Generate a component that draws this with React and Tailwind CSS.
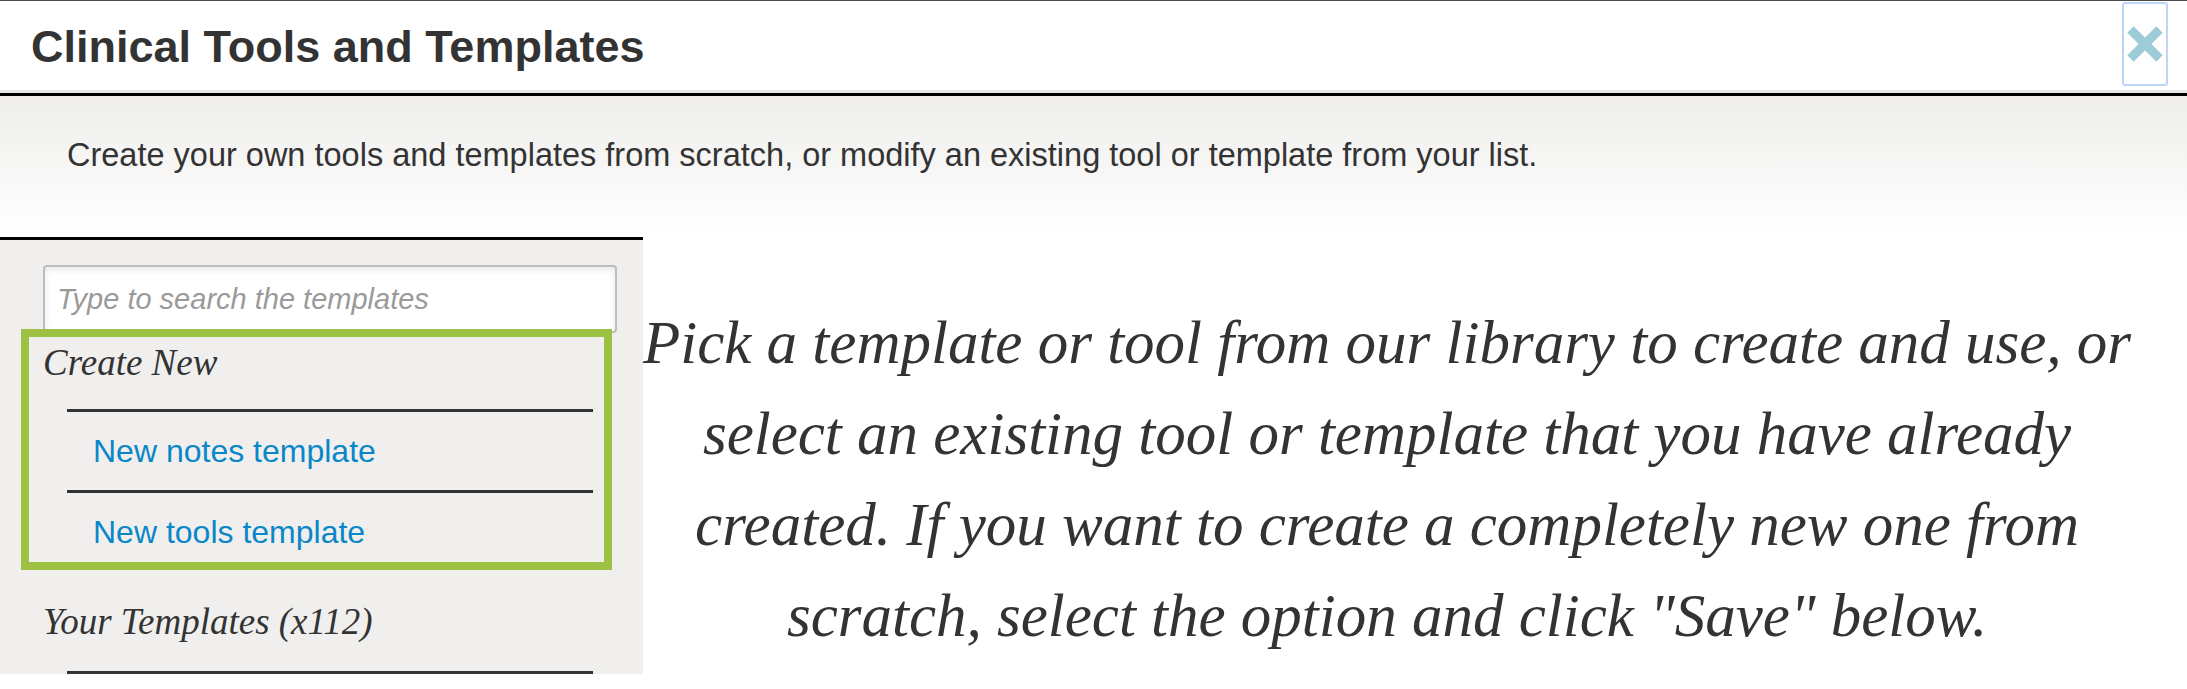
export default function App() {
  return (
    <div className="h-[689px] w-[2187px] overflow-hidden bg-white font-['Liberation_Sans',Arial,sans-serif] text-[#333]">
      <header className="flex h-[90px] items-start justify-between border-t border-[#4a4a4a] bg-white pl-[31px] pr-[19px]">
        <h1 className="pt-[21px] text-[45px] font-bold leading-[50px]">Clinical Tools and Templates</h1>
        <button className="mt-[1px] flex h-[84px] w-[46px] items-center justify-center rounded-[3px] border-2 border-[#bcd6fa]">
          <svg width="36" height="36" viewBox="0 0 36 36">
            <path d="M3.5 3.5 L32.5 32.5 M32.5 3.5 L3.5 32.5" stroke="#9ecbd8" strokeWidth="9" />
          </svg>
        </button>
      </header>
      <div className="h-[3px] bg-[#e8e8e8]" />
      <div className="h-[3px] bg-black" />
      <div className="h-[141px] bg-gradient-to-b from-[#efeeec] to-white pl-[67px] pt-[41px] text-[32.5px] leading-[36px]">
        Create your own tools and templates from scratch, or modify an existing tool or template from your list.
      </div>

      <div className="flex">
        <aside className="h-[437px] w-[643px] shrink-0 overflow-hidden border-t-[3px] border-black bg-[#f0efed] pl-[43px] pr-[26px] pt-[25px]">
          <input
            type="text"
            placeholder="Type to search the templates"
            className="block h-[68px] w-full rounded-[4px] border-2 border-[#bdbdbd] bg-white px-[12px] text-[29px] italic shadow-[inset_0_3px_6px_rgba(0,0,0,0.09)] placeholder:text-[#9a9a9a]"
          />

          <div className="relative -ml-[22px] -mt-[4px] w-[591px] border-[8px] border-[#9dc243] bg-[#f0efed] pl-[14px] pb-[11px] pt-[4px]">
            <h2 className="font-['Liberation_Serif',Times,serif] text-[37px] italic leading-[44px]">Create New</h2>
            <ul className="ml-[24px] mr-[11px] mt-[24px]">
              <li className="border-t-[3px] border-[#333] pb-[20px] pl-[26px] pt-[20px] text-[32px] leading-[38px]">
                <a href="#" className="text-[#0a87c9]">New notes template</a>
              </li>
              <li className="border-t-[3px] border-[#333] pl-[26px] pt-[20px] text-[32px] leading-[38px]">
                <a href="#" className="text-[#0a87c9]">New tools template</a>
              </li>
            </ul>
          </div>

          <h2 className="mt-[30px] font-['Liberation_Serif',Times,serif] text-[37px] italic leading-[44px]">Your Templates (x112)</h2>
          <div className="ml-[24px] mt-[27px] h-[3px] w-[526px] bg-[#333]" />
        </aside>

        <main className="flex-1 pr-[60px] pt-[60px] text-center font-['Liberation_Serif',Times,serif] text-[61px] italic leading-[91px] whitespace-nowrap">
          Pick a template or tool from our library to create and use, or
          <br />
          select an existing tool or template that you have already
          <br />
          created. If you want to create a completely new one from
          <br />
          scratch, select the option and click "Save" below.
        </main>
      </div>
    </div>
  );
}
